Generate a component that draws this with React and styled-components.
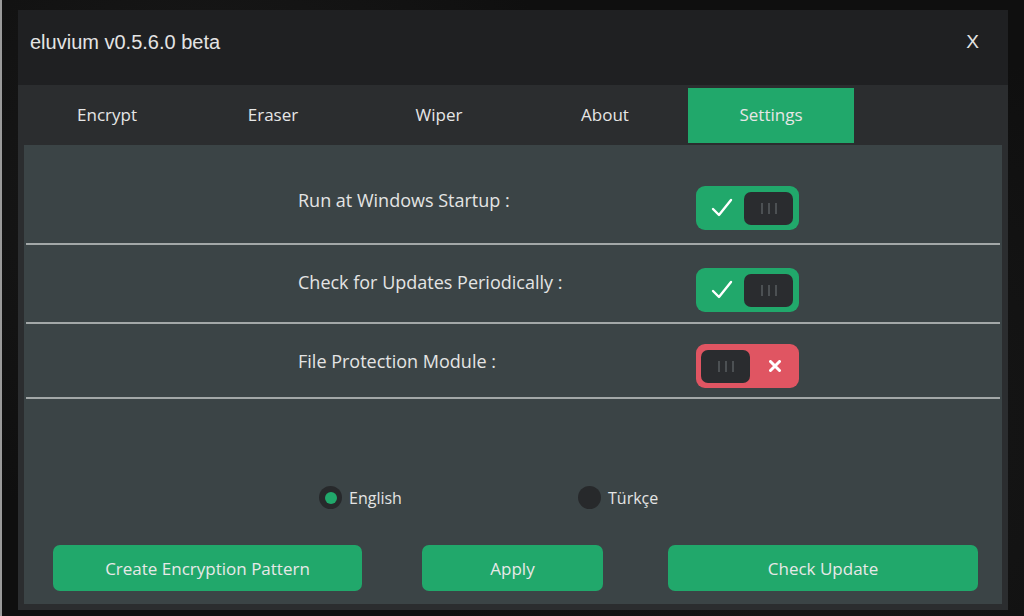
import styled, { createGlobalStyle } from "styled-components";

//#region Styled
const GlobalStyle = createGlobalStyle`
  html, body {
    margin: 0;
    padding: 0;
    background: #111111;
  }
  * { box-sizing: border-box; }
`;

const Page = styled.div`
  width: 1024px;
  height: 616px;
  padding: 10px 16px 6px 18px;
  background:
    radial-gradient(circle at 20% 30%, #1a1a1a 0, transparent 40%),
    radial-gradient(circle at 80% 70%, #181818 0, transparent 45%),
    #0f0f0f;
  border-left: 2px solid #9a9a9a;
  font-family: "Open Sans", "Noto Sans", sans-serif;
`;

const Window = styled.div`
  width: 990px;
  height: 600px;
  display: flex;
  flex-direction: column;
  margin-left: -2px;
`;

const TitleBar = styled.header`
  height: 75px;
  background: #1f2022;
  display: flex;
  align-items: flex-start;
  justify-content: space-between;
  padding: 21px 29px 0 12px;
`;

const Title = styled.h1`
  margin: 0;
  font-family: "Liberation Sans", Arial, sans-serif;
  font-weight: normal;
  font-size: 20px;
  line-height: 22px;
  color: #e4e4e4;
`;

const CloseButton = styled.span`
  font-family: "Liberation Sans", Arial, sans-serif;
  font-size: 19px;
  line-height: 22px;
  color: #e4e4e4;
`;

const Frame = styled.div`
  flex: 1;
  background: #2b2d2f;
  padding: 3px 6px 6px;
  display: flex;
  flex-direction: column;
`;

const TabRow = styled.nav`
  display: flex;
  height: 55px;
  margin-bottom: 2px;
`;

const Tab = styled.div`
  width: 166px;
  display: flex;
  align-items: center;
  justify-content: center;
  padding-bottom: 2px;
  font-size: 17px;
  color: #e6e6e6;
  background: ${(p) => (p.$active ? "#21a86b" : "transparent")};
`;

const Panel = styled.section`
  flex: 1;
  background: #3b4446;
  display: flex;
  flex-direction: column;
`;

const Row = styled.div`
  height: ${(p) => p.$height}px;
  display: flex;
  align-items: flex-end;
  padding: 0 0 ${(p) => p.$bottom}px 272px;
  margin: 0 2px;
  border-bottom: 2px solid #a3a8a8;
`;

const RowInner = styled.div`
  display: flex;
  align-items: center;
  height: 44px;
`;

const Label = styled.span`
  width: 398px;
  margin-bottom: ${(p) => p.$lift}px;
  font-size: 18px;
  color: #e4e4e4;
`;

const Toggle = styled.div`
  width: 103px;
  height: 44px;
  border-radius: 9px;
  background: ${(p) => (p.$on ? "#21a86b" : "#e05562")};
  display: flex;
  align-items: center;
  flex-direction: ${(p) => (p.$on ? "row" : "row-reverse")};
  padding: 0 ${(p) => (p.$on ? "6px" : "5px")} 0 ${(p) => (p.$on ? "15px" : "5px")};
  justify-content: space-between;
`;

const Knob = styled.div`
  width: 49px;
  height: 33px;
  border-radius: 7px;
  background: #2a2c2f;
  display: flex;
  align-items: center;
  justify-content: center;
  gap: 5px;
`;

const Grip = styled.span`
  width: 2px;
  height: 11px;
  background: #4c5053;
`;

const Mark = styled.span`
  width: ${(p) => p.$width}px;
  display: flex;
  justify-content: center;
`;

const RadioRow = styled.div`
  display: flex;
  padding-left: 295px;
  margin-top: 87px;
`;

const RadioItem = styled.label`
  width: 259px;
  display: flex;
  align-items: center;
  gap: 7px;
  font-size: 16px;
  color: #e4e4e4;
`;

const RadioCircle = styled.span`
  width: 23px;
  height: 23px;
  border-radius: 50%;
  background: #27292b;
  display: flex;
  align-items: center;
  justify-content: center;

  &::after {
    content: "";
    width: 12px;
    height: 12px;
    border-radius: 50%;
    background: ${(p) => (p.$checked ? "#21a86b" : "transparent")};
  }
`;

const ButtonRow = styled.div`
  display: flex;
  padding-left: 29px;
  margin-top: 36px;
`;

const Button = styled.button`
  width: ${(p) => p.$width}px;
  height: 46px;
  margin-left: ${(p) => p.$gap || 0}px;
  border: none;
  border-radius: 7px;
  background: #21a86b;
  color: #e8e8e8;
  font-family: "Open Sans", "Noto Sans", sans-serif;
  font-size: 17px;
  cursor: pointer;
`;
//#endregion

function Switch({ on }) {
  return (
    <Toggle $on={on}>
      {on ? (
        <Mark $width={22}>
          <svg width="22" height="20" viewBox="0 0 22 20">
            <path d="M2 11 L8 17 L20 2" fill="none" stroke="#ffffff" strokeWidth="2.4" strokeLinecap="round" strokeLinejoin="round" />
          </svg>
        </Mark>
      ) : (
        <Mark $width={38}>
          <svg width="12" height="12" viewBox="0 0 12 12">
            <path d="M1.5 1.5 L10.5 10.5 M10.5 1.5 L1.5 10.5" stroke="#ffffff" strokeWidth="3" strokeLinecap="round" />
          </svg>
        </Mark>
      )}
      <Knob>
        <Grip />
        <Grip />
        <Grip />
      </Knob>
    </Toggle>
  );
}

const settings = [
  { label: "Run at Windows Startup :", on: true, height: 100, bottom: 13, lift: 16 },
  { label: "Check for Updates Periodically :", on: true, height: 79, bottom: 10, lift: 16 },
  { label: "File Protection Module :", on: false, height: 75, bottom: 9, lift: 11 },
];

const tabs = ["Encrypt", "Eraser", "Wiper", "About", "Settings"];

export default function App() {
  return (
    <>
      <GlobalStyle />
      <Page>
        <Window>
          <TitleBar>
            <Title>eluvium v0.5.6.0 beta</Title>
            <CloseButton>X</CloseButton>
          </TitleBar>
          <Frame>
            <TabRow>
              {tabs.map((t) => (
                <Tab key={t} $active={t === "Settings"}>{t}</Tab>
              ))}
            </TabRow>
            <Panel>
              {settings.map((s) => (
                <Row key={s.label} $height={s.height} $bottom={s.bottom}>
                  <RowInner>
                    <Label $lift={s.lift}>{s.label}</Label>
                    <Switch on={s.on} />
                  </RowInner>
                </Row>
              ))}
              <RadioRow>
                <RadioItem>
                  <RadioCircle $checked />
                  English
                </RadioItem>
                <RadioItem>
                  <RadioCircle />
                  Türkçe
                </RadioItem>
              </RadioRow>
              <ButtonRow>
                <Button $width={309}>Create Encryption Pattern</Button>
                <Button $width={181} $gap={60}>Apply</Button>
                <Button $width={310} $gap={65}>Check Update</Button>
              </ButtonRow>
            </Panel>
          </Frame>
        </Window>
      </Page>
    </>
  );
}
